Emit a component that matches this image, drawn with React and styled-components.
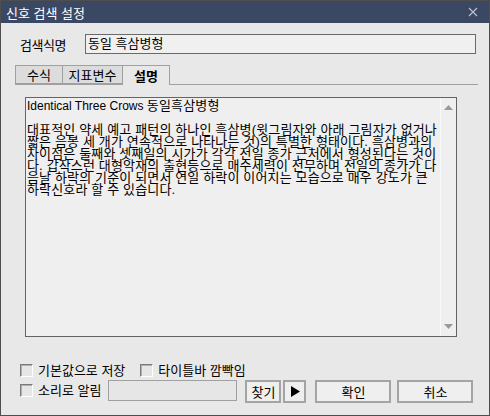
import styled, { createGlobalStyle } from "styled-components";

const GlobalStyle = createGlobalStyle`
  html, body {
    margin: 0;
    padding: 0;
    background: #e8e8e8;
  }
  * { box-sizing: border-box; }
`;

const FONT = `"Liberation Sans", "Noto Sans CJK KR", sans-serif`;

const descLines = [
  "대표적인 약세 예고 패턴의 하나인 흑삼병(윗그림자와 아래 그림자가 없거나",
  "짧은 음봉 세 개가 연속적으로 나타나는 것)의 특별한 형태이다. 흑삼병과의",
  "차이점은 둘째와 셋째일의 시가가 각각 전일 종가 근처에서 형성된다는 것이",
  "다. 갑작스런 대형악재의 출현등으로 매수세력이 전무하며 전일의 종가가 다",
  "음날 하락의 기준이 되면서 연일 하락이 이어지는 모습으로 매우 강도가 큰",
  "하락신호라 할 수 있습니다.",
];

function App() {
  return (
    <>
      <GlobalStyle />
      <Window>
        <TitleBar>
          <TitleText>신호 검색 설정</TitleText>
          <CloseIcon width="10" height="10" viewBox="0 0 10 10">
            <path d="M1 1 L9 9 M9 1 L1 9" stroke="#b8c0d0" strokeWidth="1.2" />
          </CloseIcon>
        </TitleBar>

        <Body>
          <NameRow>
            <NameLabel>검색식명</NameLabel>
            <NameInput>동일 흑삼병형</NameInput>
          </NameRow>

          <TabStrip>
            <Tab $w={48}>수식</Tab>
            <Tab $w={61}>지표변수</Tab>
            <Tab $w={48} $active>설명</Tab>
          </TabStrip>

          <TextArea>
            <TextContent>
              <FirstLine>
                <Latin>Identical Three Crows </Latin>동일흑삼병형
              </FirstLine>
              {descLines.map((l, i) => (
                <Line key={i}>{l}</Line>
              ))}
            </TextContent>
            <ScrollBar>
              <Arrow viewBox="0 0 9 5" width="9" height="5">
                <path d="M0 5 L4.5 0 L9 5 Z" fill="#9a9a9a" />
              </Arrow>
              <Arrow viewBox="0 0 9 5" width="9" height="5">
                <path d="M0 0 L4.5 5 L9 0 Z" fill="#9a9a9a" />
              </Arrow>
            </ScrollBar>
          </TextArea>

          <Footer>
            <CheckRow>
              <CheckItem $ml={5}>
                <CheckBox />
                <CheckLabel>기본값으로 저장</CheckLabel>
              </CheckItem>
              <CheckItem $ml={15}>
                <CheckBox />
                <CheckLabel>타이틀바 깜빡임</CheckLabel>
              </CheckItem>
            </CheckRow>
            <ActionRow>
              <CheckItem $ml={5} $mt={4}>
                <CheckBox />
                <CheckLabel>소리로 알림</CheckLabel>
              </CheckItem>
              <SoundInput />
              <Button $w={36} $ml={8}>찾기</Button>
              <Button $w={23} $ml={2}>
                <svg width="10" height="11" viewBox="0 0 10 11">
                  <path d="M1 0 L10 5.5 L1 11 Z" fill="#000" />
                </svg>
              </Button>
              <Button $w={76} $ml={9}>확인</Button>
              <Button $w={76} $ml={6}>취소</Button>
            </ActionRow>
          </Footer>
        </Body>
      </Window>
    </>
  );
}

export default App;

const Window = styled.div`
  width: 490px;
  height: 416px;
  border: 1px solid #4e4e4e;
  background: #e8e8e8;
  display: flex;
  flex-direction: column;
  font-family: ${FONT};
  font-size: 13px;
  color: #000;
`;

const TitleBar = styled.div`
  height: 22px;
  background: #3b4863;
  display: flex;
  align-items: center;
  justify-content: space-between;
  padding: 0 11px 0 5px;
`;

const TitleText = styled.span`
  color: #ffffff;
  font-size: 13px;
`;

const CloseIcon = styled.svg`
  display: block;
`;

const Body = styled.div`
  flex: 1;
  display: flex;
  flex-direction: column;
  padding-left: 14px;
`;

const NameRow = styled.div`
  display: flex;
  align-items: center;
  margin-top: 11px;
  height: 20px;
`;

const NameLabel = styled.span`
  width: 70px;
  padding-left: 5px;
  letter-spacing: -0.5px;
`;

const NameInput = styled.div`
  width: 391px;
  height: 20px;
  border: 1px solid #6a6a6a;
  background: #f0f0f0;
  padding: 0 0 0 2px;
  line-height: 17px;
`;

const TabStrip = styled.div`
  display: flex;
  width: 463px;
  height: 20px;
  margin-top: 11px;
  border-bottom: 1px solid #a0a0a0;
`;

const Tab = styled.div`
  width: ${(p) => p.$w}px;
  height: ${(p) => (p.$active ? 20 : 19)}px;
  border: 1px solid #a0a0a0;
  border-bottom: ${(p) => (p.$active ? "none" : "1px solid #a0a0a0")};
  margin-left: -1px;
  &:first-child { margin-left: 0; }
  background: ${(p) => (p.$active ? "#e8e8e8" : "#dcdcdc")};
  font-weight: ${(p) => (p.$active ? 700 : 400)};
  display: flex;
  align-items: center;
  justify-content: center;
  position: relative;
  z-index: ${(p) => (p.$active ? 1 : 0)};
`;

const TextArea = styled.div`
  display: flex;
  width: 432px;
  height: 240px;
  margin-top: 12px;
  margin-left: 10px;
  border: 1px solid #646464;
  background: #efefef;
`;

const TextContent = styled.div`
  flex: 1;
  padding: 2px 0 0 1px;
  overflow: hidden;
  letter-spacing: 0.15px;
`;

const FirstLine = styled.div`
  line-height: 12px;
  height: 12px;
  margin-bottom: 12px;
  white-space: pre;
`;

const Latin = styled.span`
  font-size: 12px;
  letter-spacing: 0;
`;

const Line = styled.div`
  line-height: 12px;
  height: 12px;
  white-space: pre;
`;

const ScrollBar = styled.div`
  width: 16px;
  border-left: 1px solid #fafafa;
  display: flex;
  flex-direction: column;
  justify-content: space-between;
  align-items: center;
  padding: 7px 0 7px 0;
`;

const Arrow = styled.svg`
  display: block;
`;

const Footer = styled.div`
  display: flex;
  flex-direction: column;
  margin-top: 27px;
`;

const CheckRow = styled.div`
  display: flex;
  height: 13px;
  align-items: center;
`;

const ActionRow = styled.div`
  display: flex;
  align-items: flex-start;
  margin-top: 3px;
`;

const CheckItem = styled.label`
  display: flex;
  align-items: center;
  gap: 5px;
  margin-left: ${(p) => p.$ml || 0}px;
  margin-top: ${(p) => p.$mt || 0}px;
`;

const CheckBox = styled.span`
  display: block;
  width: 13px;
  height: 13px;
  border-top: 1px solid #7a7a7a;
  border-left: 1px solid #7a7a7a;
  border-right: 1px solid #ffffff;
  border-bottom: 1px solid #ffffff;
  background: #e6e6e6;
  box-shadow: inset 1px 1px 0 #b0b0b0;
`;

const CheckLabel = styled.span`
  line-height: 13px;
`;

const SoundInput = styled.div`
  width: 129px;
  height: 21px;
  margin-left: 7px;
  border: 1px solid #a0a0a0;
  background: #e6e6e6;
`;

const Button = styled.div`
  width: ${(p) => p.$w}px;
  height: 23px;
  margin-left: ${(p) => p.$ml}px;
  border: 2px solid #a4a4a4;
  background: #efefef;
  display: flex;
  align-items: center;
  justify-content: center;
`;
